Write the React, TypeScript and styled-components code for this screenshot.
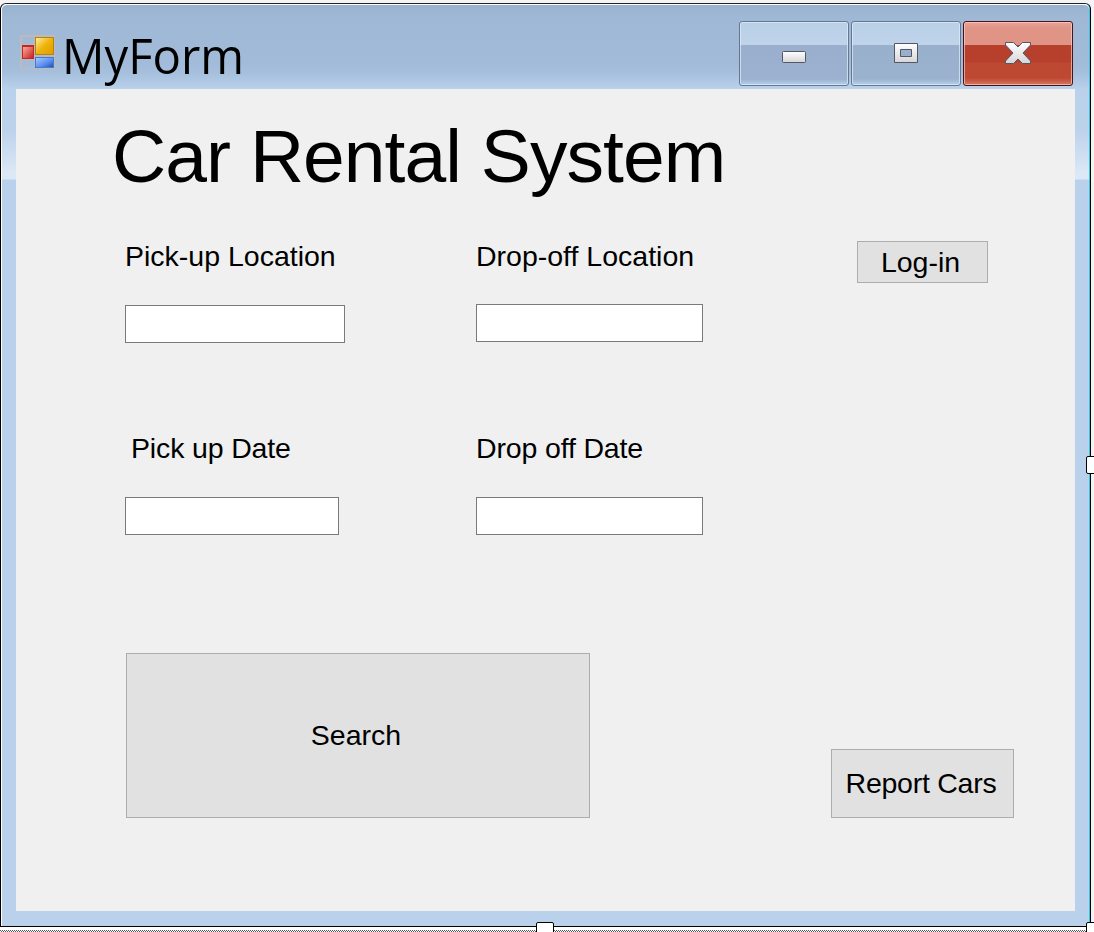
import React from "react";
import styled, { createGlobalStyle } from "styled-components";

const GlobalStyle = createGlobalStyle`
  * { box-sizing: border-box; }
  body { margin: 0; background: #f4f4f4; overflow: hidden; }
`;

const Designer = styled.main`
  position: relative;
  width: 1094px;
  height: 932px;
  padding-top: 3px;
  background: #f4f4f4;
  overflow: hidden;
  font-family: "Liberation Sans", Arial, sans-serif;
  color: #000;
`;

const Frame = styled.section`
  width: 1091px;
  height: 924px;
  border: 1px solid #000;
  border-top-color: #222;
  border-radius: 6px 6px 0 0;
  background: #b9d1ea;
  box-shadow: inset 1px 1px 0 #fff, inset -1px -1px 0 #35c7e2;
`;

const TitleBar = styled.header`
  display: flex;
  height: 85px;
  margin: 0 1px;
  padding: 16px 16px 0 18px;
  border-top: 1px solid #fff;
  border-radius: 5px 5px 0 0;
  background: linear-gradient(#97b2cf 0, #9fb8d5 13px, #a2bbd8 58px, #a5bfdd 68px, #b7cfe9 82px, #b9d1ea 100%);
`;

const AppIcon = styled.svg`
  flex: none;
  margin-top: 14px;
`;

const Caption = styled.h1`
  flex: 1;
  margin: 0 0 0 7px;
  font: 400 50px/68px "Open Sans", "Noto Sans", sans-serif;
  transform: scaleX(0.945);
  transform-origin: left;
  white-space: nowrap;
`;

const WindowButtons = styled.div`
  display: flex;
  gap: 2px;
`;

const WindowButton = styled.button<{ $tone: "violet" | "blue" | "red" }>`
  display: grid;
  place-items: center;
  width: 110px;
  height: 65px;
  padding: 0 0 2px;
  border: 1px solid ${(p) => (p.$tone === "red" ? "#49131d" : "#66778f")};
  border-radius: 3px;
  box-shadow: inset 0 0 0 1px ${(p) => (p.$tone === "red" ? "rgba(255,210,200,.65)" : "rgba(220,235,250,.75)")};
  background: ${(p) =>
    p.$tone === "red"
      ? "linear-gradient(#e7a397 0, #df9486 6px, #df9486 23px, #b6402b 23px, #b6402b 40px, #bd4932 41px, #bd4932 56px, #d37764 100%)"
      : p.$tone === "violet"
        ? "linear-gradient(#bad0e7 0, #bfd4ea 23px, #9aafcd 23px, #9bb1cf 57px, #b7d0ea 100%)"
        : "linear-gradient(#bad0e7 0, #bfd4ea 23px, #98b0cb 23px, #9ab2cd 57px, #b7d0ea 100%)"};
`;

const Sides = styled.div`
  height: 837px;
  margin: 0 1px 1px;
  padding: 0 14px 14px;
  background: linear-gradient(#b9d1ea 0, #bbd2eb 40px, #dce8f5 85px, #dce8f5 90px, #b9d1ea 91px);
`;

const Client = styled.form`
  display: flex;
  width: 1059px;
  height: 822px;
  background: #f0f0f0;
`;

const Booking = styled.div`
  width: 724px;
  padding: 28px 0 0 109px;
`;

const Heading = styled.h2`
  margin: 0 0 0 -13px;
  font-size: 75px;
  line-height: 78px;
  font-weight: 400;
  letter-spacing: -0.95px;
  white-space: nowrap;
`;

const Fields = styled.div`
  display: grid;
  grid-template-columns: 351px 227px;
  grid-template-rows: 192px 192px;
  margin-top: 44px;
`;

const Field = styled.label<{ $gap: number; $indent?: number; $tracking?: number }>`
  display: flex;
  flex-direction: column;
  align-items: flex-start;
  gap: ${(p) => p.$gap}px;
  font-size: 28.5px;
  line-height: 34px;
  letter-spacing: ${(p) => p.$tracking ?? 0}px;
  white-space: nowrap;
  > span { padding-left: ${(p) => p.$indent ?? 0}px; }
`;

const TextBox = styled.input<{ $width: number }>`
  width: ${(p) => p.$width}px;
  height: 38px;
  padding: 0 6px;
  border: 1px solid #7a7a7a;
  border-radius: 0;
  background: #fff;
  font: inherit;
  outline: none;
`;

const PushButton = styled.button<{ $width: number; $height: number }>`
  display: block;
  width: ${(p) => p.$width}px;
  height: ${(p) => p.$height}px;
  padding: 0;
  border: 1px solid #adadad;
  border-radius: 0;
  background: #e1e1e1;
  color: #000;
  font: 400 28.5px/34px "Liberation Sans", Arial, sans-serif;
  white-space: nowrap;
`;

const SearchButton = styled(PushButton)`
  margin: 30px 0 0 1px;
  padding: 0 4px 2px 0;
`;

const Actions = styled.div`
  display: flex;
  flex-direction: column;
  justify-content: space-between;
  align-items: center;
  width: 335px;
  padding: 152px 61px 93px 91px;
`;

const LoginButton = styled(PushButton)`
  margin-right: 1px;
  padding-right: 3px;
`;

const ReportButton = styled(PushButton)`
  padding: 0 3px 2px 0;
  letter-spacing: -0.25px;
`;

const DottedEdge = styled.div`
  height: 5px;
  padding-top: 3px;
  background: repeating-conic-gradient(#555 0 25%, #fff 0 50%) 0 1px / 2px 2px content-box, #fff;
`;

const Handle = styled.i<{ $x: number; $y: number }>`
  position: absolute;
  left: ${(p) => p.$x}px;
  top: ${(p) => p.$y}px;
  width: 18px;
  height: 18px;
  border: 1px solid #000;
  border-radius: 2px;
  background: #fff;
`;

function FormIcon() {
  return (
    <AppIcon width="35" height="35" viewBox="0 0 35 35" shapeRendering="crispEdges" aria-hidden="true">
      <defs>
        <linearGradient id="gold" x1="0" y1="0" x2="1" y2="1">
          <stop stopColor="#fff0a0" /><stop offset=".5" stopColor="#edb30b" /><stop offset="1" stopColor="#df9b00" />
        </linearGradient>
        <linearGradient id="red" x1="0" y1="0" x2="1" y2="1">
          <stop stopColor="#f6aaa3" /><stop offset="1" stopColor="#c9211b" />
        </linearGradient>
        <linearGradient id="azure" x1="0" y1="0" x2="1" y2="1">
          <stop stopColor="#aacdff" /><stop offset=".6" stopColor="#568bf1" /><stop offset="1" stopColor="#244b9e" />
        </linearGradient>
      </defs>
      <path d="M0 0h35v34H0zM2 2v31h31V2z" fill="#bdbabd" fillRule="evenodd" />
      <path d="M14.500 1v32M1 9.500h14M1 24.500h14M7.500 24v9M15 20.500h19" fill="none" stroke="#b5bac6" />
      <rect x="15.500" y="2.500" width="18" height="17" fill="url(#gold)" stroke="#b98208" />
      <rect x="2" y="10" width="12" height="14" fill="#c62620" />
      <rect x="3" y="12" width="10" height="11" fill="url(#red)" />
      <rect x="15.500" y="22.500" width="18" height="10" fill="url(#azure)" stroke="#4779cc" />
    </AppIcon>
  );
}

const Chrome = () => (
  <defs>
    <linearGradient id="silver" x1="0" y1="0" x2="0" y2="1">
      <stop stopColor="#fff" /><stop offset="1" stopColor="#d6d6d6" />
    </linearGradient>
  </defs>
);

export default function App() {
  return (
    <>
      <GlobalStyle />
      <Designer>
        <Frame>
          <TitleBar>
            <FormIcon />
            <Caption>MyForm</Caption>
            <WindowButtons>
              <WindowButton $tone="violet" aria-label="Minimize">
                <svg width="28" height="24">
                  <Chrome />
                  <rect x="2.5" y="10.5" width="23" height="11" rx="1" fill="url(#silver)" stroke="#535666" />
                </svg>
              </WindowButton>
              <WindowButton $tone="blue" aria-label="Maximize">
                <svg width="28" height="24">
                  <path fillRule="evenodd" d="M2.5 2.5h23v19h-23zM8.5 8.5v7h11v-7z" fill="url(#silver)" stroke="#535666" strokeLinejoin="round" />
                </svg>
              </WindowButton>
              <WindowButton $tone="red" aria-label="Close">
                <svg width="28" height="24">
                  <path d="M1.5 1.5h8l4.500 4.500 4.500-4.500h8v2.500L19 12l7.500 8v2.500h-8L14 18l-4.500 4.500h-8V20L9 12 1.500 4z" fill="url(#silver)" stroke="#535666" strokeLinejoin="round" />
                </svg>
              </WindowButton>
            </WindowButtons>
          </TitleBar>
          <Sides>
            <Client onSubmit={(e) => e.preventDefault()}>
              <Booking>
                <Heading>Car Rental System</Heading>
                <Fields>
                  <Field $gap={32}><span>Pick-up Location</span><TextBox $width={220} /></Field>
                  <Field $gap={31}><span>Drop-off Location</span><TextBox $width={227} /></Field>
                  <Field $gap={32} $indent={6} $tracking={-0.15}><span>Pick up Date</span><TextBox $width={214} /></Field>
                  <Field $gap={32} $tracking={-0.15}><span>Drop off Date</span><TextBox $width={227} /></Field>
                </Fields>
                <SearchButton $width={464} $height={165}>Search</SearchButton>
              </Booking>
              <Actions>
                <LoginButton $width={131} $height={42}>Log-in</LoginButton>
                <ReportButton $width={183} $height={69}>Report Cars</ReportButton>
              </Actions>
            </Client>
          </Sides>
        </Frame>
        <DottedEdge />
        <Handle $x={1086} $y={456} />
        <Handle $x={536} $y={922} />
        <Handle $x={1086} $y={922} />
      </Designer>
    </>
  );
}
